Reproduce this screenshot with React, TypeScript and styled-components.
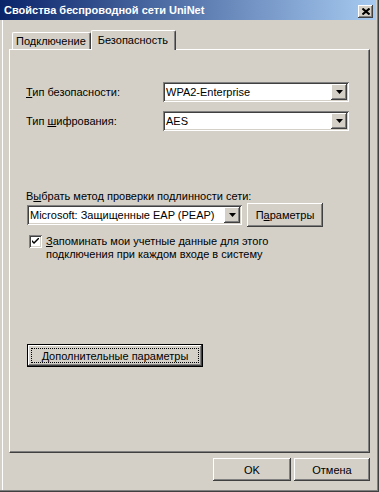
import React from 'react';
import styled, { createGlobalStyle } from 'styled-components';

const GlobalStyle = createGlobalStyle`
  html, body {
    margin: 0;
    padding: 0;
    background: #d4d0c8;
  }
  body {
    font-family: 'Liberation Sans', Arial, sans-serif;
    font-size: 11px;
    color: #000;
  }
`;

export default function App() {
  return (
    <>
      <GlobalStyle />
      <Window>
        <TitleBar>
          <TitleText>Свойства беспроводной сети UniNet</TitleText>
          <CloseButton>
            <svg width="8" height="7" viewBox="0 0 8 7">
              <path d="M0.5 0.5 L7.5 6.5 M7.5 0.5 L0.5 6.5" stroke="#000" strokeWidth="2" />
            </svg>
          </CloseButton>
        </TitleBar>

        <Body>
          <TabRow>
            <Tab>Подключение</Tab>
            <Tab $active>Безопасность</Tab>
          </TabRow>

          <Panel>
            <FieldGrid>
              <Label><U>Т</U>ип безопасности:</Label>
              <Select value="WPA2-Enterprise" />
              <Label>Тип <U>ш</U>ифрования:</Label>
              <Select value="AES" />
            </FieldGrid>

            <SectionLabel>В<U>ы</U>брать метод проверки подлинности сети:</SectionLabel>
            <MethodRow>
              <Select value="Microsoft: Защищенные EAP (PEAP)" width={215} />
              <Button $width={76} $height={24}>П<U>а</U>раметры</Button>
            </MethodRow>

            <CheckRow>
              <CheckBox>
                <svg width="7" height="7" viewBox="0 0 7 7">
                  <path d="M0 2 L0 4 L2 6 L7 1 L7 -1 L2 4 Z" fill="#000" />
                </svg>
              </CheckBox>
              <CheckText>
                <U>З</U>апоминать мои учетные данные для этого<br />
                подключения при каждом входе в систему
              </CheckText>
            </CheckRow>

            <AdvancedRow>
              <Button $width={176} $height={23} $default>
                <U>Д</U>ополнительные параметры
              </Button>
            </AdvancedRow>
          </Panel>

          <Footer>
            <Button $width={78} $height={23}>OK</Button>
            <Button $width={76} $height={23}>Отмена</Button>
          </Footer>
        </Body>
      </Window>
    </>
  );
}

function Select({ value, width }: { value: string, width?: number }) {
  return (
    <SelectBox style={width ? { width } : undefined}>
      <SelectValue>{value}</SelectValue>
      <DropButton>
        <svg width="7" height="4" viewBox="0 0 7 4">
          <path d="M0 0 H7 L3.5 4 Z" fill="#000" />
        </svg>
      </DropButton>
    </SelectBox>
  );
}

const raised = `
  box-shadow:
    inset -1px -1px #404040,
    inset 1px 1px #ffffff,
    inset -2px -2px #808080,
    inset 2px 2px #d4d0c8;
`;

const Window = styled.div`
  width: 379px;
  height: 492px;
  box-sizing: border-box;
  display: flex;
  flex-direction: column;
  background: #d4d0c8;
  box-shadow:
    inset -1px -1px #404040,
    inset -2px -2px #808080,
    inset 2px 0 #d4d0c8,
    inset 3px 0 #ffffff;
  overflow: hidden;
`;

const TitleBar = styled.div`
  display: flex;
  align-items: center;
  justify-content: space-between;
  height: 20px;
  margin-right: 3px;
  padding: 0 3px 0 4px;
  background: linear-gradient(to right, #0a246a, #a6caf0);
`;

const TitleText = styled.span`
  color: #fff;
  font-weight: bold;
  font-size: 11px;
  white-space: nowrap;
`;

const CloseButton = styled.div`
  display: flex;
  align-items: center;
  justify-content: center;
  width: 15px;
  height: 13px;
  margin-top: 2px;
  background: #d4d0c8;
  ${raised}
`;

const Body = styled.div`
  flex: 1;
  display: flex;
  flex-direction: column;
  padding: 10px 9px 11px 9px;
`;

const TabRow = styled.div`
  display: flex;
  align-items: flex-end;
  height: 19px;
  padding-left: 3px;
`;

interface TabProps {
  $active?: boolean;
}
const Tab = styled.div<TabProps>`
  position: relative;
  z-index: ${({ $active }) => $active ? 1 : 0};
  display: flex;
  align-items: center;
  box-sizing: border-box;
  height: ${({ $active }) => $active ? '20px' : '17px'};
  margin: ${({ $active }) => $active ? '0 -2px -1px 0' : '0'};
  padding: ${({ $active }) => $active ? '0 7px 2px 6px' : '0 4px 0 3px'};
  background: #d4d0c8;
  border-top: 1px solid #fff;
  border-left: 1px solid #fff;
  border-right: 1px solid #404040;
  box-shadow: inset -1px 0 #808080;
  border-radius: 2px 2px 0 0;
  white-space: nowrap;
`;

const Panel = styled.div`
  flex: 1;
  display: flex;
  flex-direction: column;
  padding: 32px 0 0 16px;
  border-top: 1px solid #fff;
  border-left: 1px solid #fff;
  border-right: 1px solid #404040;
  border-bottom: 1px solid #404040;
  box-shadow: inset -1px -1px #808080;
`;

const FieldGrid = styled.div`
  display: grid;
  grid-template-columns: 137px 186px;
  grid-auto-rows: 20px;
  row-gap: 9px;
  align-items: center;
`;

const Label = styled.span`
  white-space: nowrap;
`;

const U = styled.span`
  text-decoration: underline;
`;

const SectionLabel = styled.div`
  margin-top: 59px;
  line-height: 13px;
  white-space: nowrap;
`;

const MethodRow = styled.div`
  display: flex;
  align-items: center;
  gap: 5px;
  height: 24px;
  padding-left: 1px;
`;

const SelectBox = styled.div`
  display: flex;
  align-items: stretch;
  box-sizing: border-box;
  height: 20px;
  padding: 2px;
  background: #fff;
  box-shadow:
    inset 1px 1px #808080,
    inset -1px -1px #ffffff,
    inset 2px 2px #404040,
    inset -2px -2px #d4d0c8;
`;

const SelectValue = styled.div`
  flex: 1;
  display: flex;
  align-items: center;
  padding-left: 1px;
  white-space: nowrap;
  overflow: hidden;
`;

const DropButton = styled.div`
  display: flex;
  align-items: center;
  justify-content: center;
  width: 16px;
  background: #d4d0c8;
  ${raised}
`;

interface ButtonProps {
  $width: number;
  $height: number;
  $default?: boolean;
}
const Button = styled.div<ButtonProps>`
  position: relative;
  display: flex;
  align-items: center;
  justify-content: center;
  box-sizing: border-box;
  width: ${({ $width }) => $width}px;
  height: ${({ $height }) => $height}px;
  background: #d4d0c8;
  white-space: nowrap;
  ${({ $default }) => $default ? `
    border: 1px solid #000;
    &::after {
      content: '';
      position: absolute;
      inset: 3px;
      border: 1px dotted #000;
    }
  ` : ''}
  ${raised}
`;

const CheckRow = styled.div`
  display: flex;
  align-items: flex-start;
  gap: 4px;
  margin-top: 8px;
  padding-left: 3px;
`;

const CheckBox = styled.div`
  display: flex;
  align-items: center;
  justify-content: center;
  width: 13px;
  height: 13px;
  flex-shrink: 0;
  box-sizing: border-box;
  background: #fff;
  box-shadow:
    inset 1px 1px #808080,
    inset -1px -1px #ffffff,
    inset 2px 2px #404040,
    inset -2px -2px #d4d0c8;
`;

const CheckText = styled.div`
  line-height: 13px;
  white-space: nowrap;
`;

const AdvancedRow = styled.div`
  margin-top: 83px;
  padding-left: 1px;
`;

const Footer = styled.div`
  display: flex;
  justify-content: flex-end;
  gap: 3px;
  margin-top: 5px;
`;
